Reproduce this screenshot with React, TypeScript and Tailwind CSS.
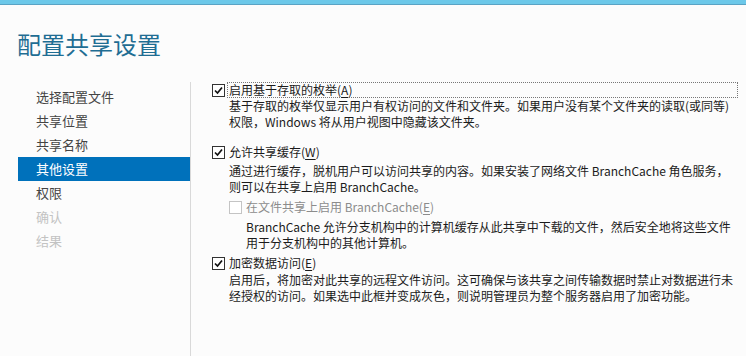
const navItems = [
  { label: '选择配置文件', state: 'normal' },
  { label: '共享位置', state: 'normal' },
  { label: '共享名称', state: 'normal' },
  { label: '其他设置', state: 'active' },
  { label: '权限', state: 'normal' },
  { label: '确认', state: 'disabled' },
  { label: '结果', state: 'disabled' },
];

const font = { fontFamily: '"Segoe UI", "Noto Sans CJK SC", "Noto Sans", sans-serif' };

const CheckBox = ({ checked, disabled }: { checked?: boolean; disabled?: boolean }) => (
  <span
    className={`flex h-[13px] w-[13px] shrink-0 items-center justify-center border bg-white ${
      disabled ? 'border-[#c4c4c4]' : 'border-[#333333]'
    }`}
  >
    {checked && (
      <svg width="9" height="9" viewBox="0 0 9 9" fill="none">
        <path d="M1 4.5 L3.5 7 L8 1.5" stroke="#111" strokeWidth="1.7" />
      </svg>
    )}
  </span>
);

const Label = ({ text, hot }: { text: string; hot: string }) => (
  <>
    {text}(<span className="underline underline-offset-2">{hot}</span>)
  </>
);

export default function App() {
  return (
    <div className="h-[356px] w-[746px] overflow-hidden bg-[#fcfcfc] text-[#1b1b1b]" style={font}>
      <div className="h-[4px] bg-[#6cc8e9]" />
      <div className="h-px bg-[#5aa3c4]" />

      <h1 className="pl-[17px] pt-[23px] text-[24px] leading-[32px] font-normal text-[#1f6d93]">
        配置共享设置
      </h1>

      <div className="mt-[22px] flex">
        <nav className="w-[190px] shrink-0 pl-[18px] pt-[3px]">
          {navItems.map((item) => (
            <div
              key={item.label}
              className={`h-6 pl-[18px] text-[13px] leading-6 ${
                item.state === 'active'
                  ? 'bg-[#0071bb] text-white'
                  : item.state === 'disabled'
                  ? 'text-[#c3c3c3]'
                  : 'text-[#444444]'
              }`}
            >
              {item.label}
            </div>
          ))}
        </nav>

        <div className="flex-1 border-l border-[#d9d9d9] h-[300px] pl-[21px] text-[12px] leading-4">
          <div className="flex items-center gap-[2px]">
            <CheckBox checked />
            <span className="flex-1 mr-[8px] border border-dotted border-[#777] px-[1px] leading-[14px]">
              <Label text="启用基于存取的枚举" hot="A" />
            </span>
          </div>
          <p className="pl-[17px]">
            基于存取的枚举仅显示用户有权访问的文件和文件夹。如果用户没有某个文件夹的读取(或同等)
            <br />
            权限，Windows 将从用户视图中隐藏该文件夹。
          </p>

          <div className="mt-[14px] flex items-center gap-[4px]">
            <CheckBox checked />
            <span>
              <Label text="允许共享缓存" hot="W" />
            </span>
          </div>
          <p className="mt-[3px] pl-[17px]">
            通过进行缓存，脱机用户可以访问共享的内容。如果安装了网络文件 BranchCache 角色服务，
            <br />
            则可以在共享上启用 BranchCache。
          </p>

          <div className="mt-[4px] flex items-center gap-[4px] pl-[17px] text-[#8c8c8c]">
            <CheckBox disabled />
            <span>
              <Label text="在文件共享上启用 BranchCache" hot="E" />
            </span>
          </div>
          <p className="mt-[4px] pl-[34px]">
            BranchCache 允许分支机构中的计算机缓存从此共享中下载的文件，然后安全地将这些文件
            <br />
            用于分支机构中的其他计算机。
          </p>

          <div className="mt-[4px] flex items-center gap-[4px]">
            <CheckBox checked />
            <span>
              <Label text="加密数据访问" hot="E" />
            </span>
          </div>
          <p className="mt-[1px] pl-[17px]">
            启用后，将加密对此共享的远程文件访问。这可确保与该共享之间传输数据时禁止对数据进行未
            <br />
            经授权的访问。如果选中此框并变成灰色，则说明管理员为整个服务器启用了加密功能。
          </p>
        </div>
      </div>
    </div>
  );
}
